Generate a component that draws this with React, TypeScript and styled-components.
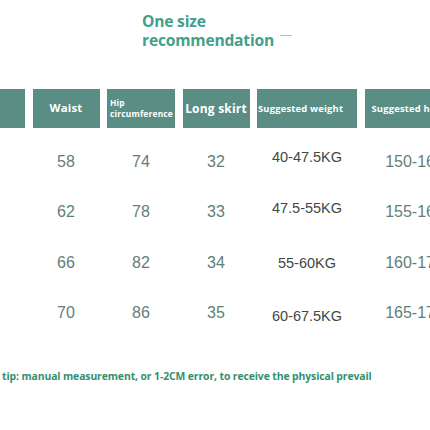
import React from "react";
import styled, { createGlobalStyle } from "styled-components";

const GlobalStyle = createGlobalStyle`
	html, body {
		margin: 0;
		padding: 0;
		background: #fff;
		overflow: hidden;
	}
`;

const Page = styled.div`
	width: 430px;
	height: 430px;
	overflow: hidden;
	display: flex;
	flex-direction: column;
	font-family: "Liberation Sans", Arial, sans-serif;
`;

const Title = styled.h1`
	margin: 0;
	padding: 12px 0 0 142px;
	font-family: "Open Sans", sans-serif;
	font-weight: 700;
	font-size: 15.6px;
	line-height: 19px;
	color: #43a08a;
	letter-spacing: -0.2px;
`;

const Dash = styled.span`
	display: inline-block;
	width: 12px;
	height: 1px;
	margin-left: 6px;
	vertical-align: 10px;
	background: #9fcbc1;
`;

const columns = "25px 67px 68px 67px 100px 100px";

const HeaderRow = styled.div`
	display: grid;
	grid-template-columns: ${columns};
	column-gap: 7.5px;
	height: 39px;
	margin-top: 39px;
`;

const HeadCell = styled.div<{ $size: number; $align?: "left" | "center"; $pad?: number }>`
	background: #5a8e85;
	color: #fff;
	display: flex;
	align-items: center;
	justify-content: ${(p) => (p.$align === "left" ? "flex-start" : "center")};
	padding-left: ${(p) => p.$pad ?? 0}px;
	font-family: "Open Sans", sans-serif;
	font-weight: 700;
	font-size: ${(p) => p.$size}px;
	line-height: 1.25;
	letter-spacing: 0.2px;
	white-space: nowrap;
	overflow: hidden;
`;

const Body = styled.div`
	display: flex;
	flex-direction: column;
	margin-top: 9px;
`;

const Row = styled.div`
	display: grid;
	grid-template-columns: ${columns};
	column-gap: 7.5px;
	height: 50.3px;
	align-items: center;
`;

const Num = styled.div`
	text-align: center;
	font-size: 16px;
	color: #5f7f77;
	white-space: nowrap;
`;

const Weight = styled.div<{ $lift: number }>`
	text-align: center;
	font-size: 14.5px;
	color: #3e4846;
	white-space: nowrap;
	transform: translateY(${(p) => p.$lift}px);
`;

const Tip = styled.p`
	margin: 31px 0 0 2px;
	font-family: "Open Sans", sans-serif;
	font-weight: 700;
	font-size: 10.4px;
	letter-spacing: -0.1px;
	color: #33906f;
	white-space: nowrap;
`;

const rows = [
	{ waist: 58, hip: 74, skirt: 32, weight: "40-47.5KG", height: "150-160", lift: -5 },
	{ waist: 62, hip: 78, skirt: 33, weight: "47.5-55KG", height: "155-165", lift: -4.5 },
	{ waist: 66, hip: 82, skirt: 34, weight: "55-60KG", height: "160-170", lift: 0 },
	{ waist: 70, hip: 86, skirt: 35, weight: "60-67.5KG", height: "165-175", lift: 3 },
];

const App: React.FC = () => {
	return (
		<React.Fragment>
			<GlobalStyle />
			<Page>
				<Title>
					One size
					<br />
					recommendation
					<Dash />
				</Title>

				<HeaderRow>
					<HeadCell $size={11} />
					<HeadCell $size={11.4}>Waist</HeadCell>
					<HeadCell $size={8.4} $align="left" $pad={3}>
						Hip
						<br />
						circumference
					</HeadCell>
					<HeadCell $size={12}>Long skirt</HeadCell>
					<HeadCell $size={9.4} $align="left" $pad={1}>
						Suggested weight
					</HeadCell>
					<HeadCell $size={9.4} $align="left" $pad={7}>
						Suggested height
					</HeadCell>
				</HeaderRow>

				<Body>
					{rows.map((r) => (
						<Row key={r.waist}>
							<Num />
							<Num>{r.waist}</Num>
							<Num>{r.hip}</Num>
							<Num>{r.skirt}</Num>
							<Weight $lift={r.lift}>{r.weight}</Weight>
							<Num>{r.height}</Num>
						</Row>
					))}
				</Body>

				<Tip>tip: manual measurement, or 1-2CM error, to receive the physical prevail</Tip>
			</Page>
		</React.Fragment>
	);
};

export default App;
